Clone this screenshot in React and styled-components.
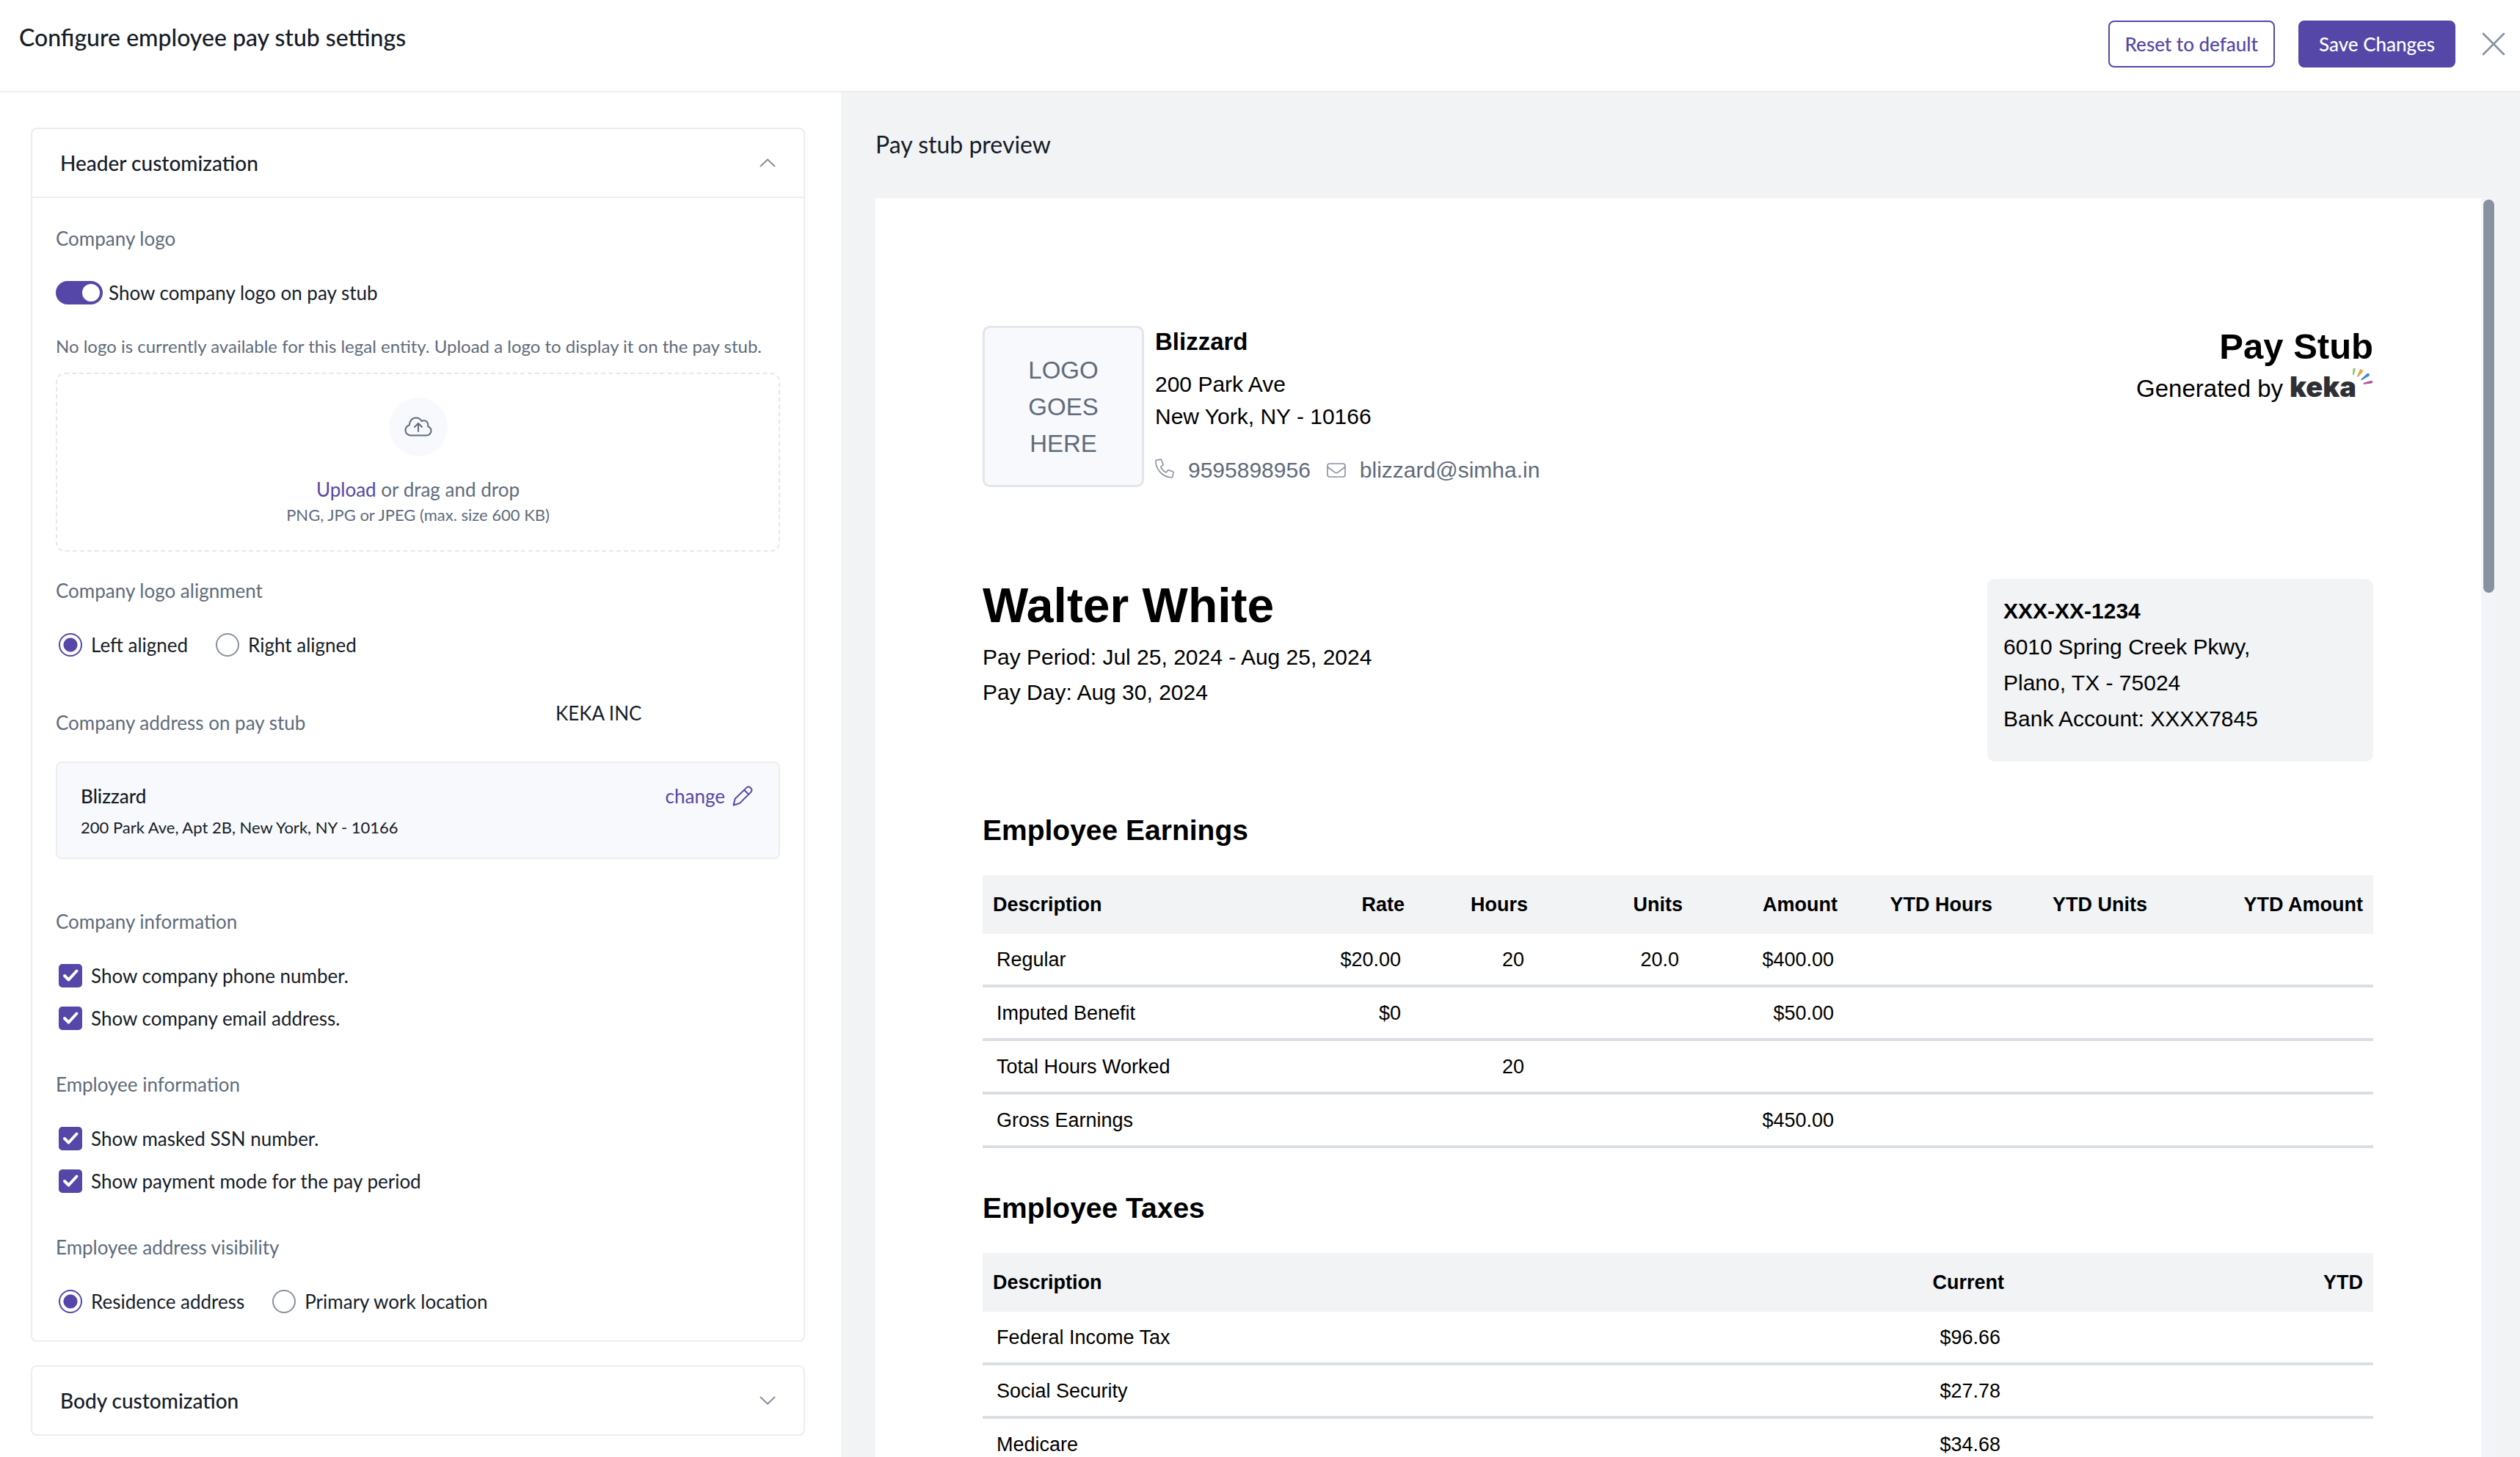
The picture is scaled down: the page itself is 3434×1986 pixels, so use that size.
import React, { useState } from "react";
import styled, { createGlobalStyle } from "styled-components";

const GlobalStyle = createGlobalStyle`
  * {
    box-sizing: border-box;
  }
  body {
    margin: 0;
    background: #fff;
    color: #161c28;
    font-family: Lato, "Open Sans", sans-serif;
    font-size: 26px;
    line-height: 32px;
  }
  h1, h2, h3, p, fieldset, legend {
    margin: 0;
    padding: 0;
    border: 0;
    font-weight: 400;
  }
  button, input {
    font: inherit;
    margin: 0;
  }
`;

const Page = styled.div`
  display: flex;
  flex-direction: column;
  height: 100vh;
  overflow: hidden;
`;

const TopBar = styled.header`
  flex: none;
  display: flex;
  align-items: flex-start;
  justify-content: space-between;
  padding: 28px 20px 32px 26px;
  border-bottom: 2px solid #ebedee;
`;

const Title = styled.h1`
  font-size: 32px;
  line-height: 46px;
  font-weight: 500;
`;

const Actions = styled.div`
  display: flex;
  align-items: center;
`;

const Button = styled.button`
  min-width: 214px;
  height: 64px;
  margin-right: ${(props) => (props.$primary ? "36px" : "32px")};
  padding: 0 21px;
  border: 2px solid #5547a8;
  border-radius: 8px;
  background: ${(props) => (props.$primary ? "#5547a8" : "#fff")};
  color: ${(props) => (props.$primary ? "#fff" : "#5547a8")};
  font-weight: 500;
`;

const PlainButton = styled.button`
  display: flex;
  align-items: center;
  padding: 0;
  border: 0;
  background: none;
  color: #87919f;
`;

const Main = styled.main`
  flex: 1;
  min-height: 0;
  display: grid;
  grid-template-columns: 1146fr 2288fr;
`;

const Settings = styled.section`
  display: flex;
  flex-direction: column;
  gap: 32px;
  padding: 48px 49px 0 42px;
`;

const Card = styled.div`
  border: 2px solid #ebedee;
  border-radius: 8px;
`;

const CardToggle = styled.button`
  display: flex;
  align-items: center;
  justify-content: space-between;
  width: 100%;
  height: ${(props) => (props.$open ? "94px" : "92px")};
  padding: 0 38px;
  border: 0;
  border-bottom: ${(props) => (props.$open ? "2px solid #ebedee" : "0")};
  background: none;
  color: inherit;
  font-size: 28px;
  font-weight: 500;
`;

const CardBody = styled.div`
  padding: 39px 32px 37px;
`;

const Group = styled.fieldset`
  min-width: 0;
  margin-bottom: ${(props) => props.$space || "58px"};

  &:last-child {
    margin-bottom: 0;
  }
`;

const Label = styled.legend`
  display: block;
  margin-bottom: 42px;
  color: #5f6b7b;
`;

const Options = styled.div`
  display: flex;
  flex-direction: ${(props) => (props.$row ? "row" : "column")};
  gap: ${(props) => (props.$row ? "38px" : "26px")};
  padding-left: 4px;
`;

const Option = styled.label`
  display: flex;
  align-items: center;
  gap: 12px;
`;

const Radio = styled.input.attrs({ type: "radio" })`
  appearance: none;
  width: 32px;
  height: 32px;
  border: 2px solid #87919f;
  border-radius: 50%;
  background: #fff;

  &:checked {
    border-color: #5547a8;
    background: radial-gradient(circle, #5547a8 9px, #fff 10px);
  }
`;

const TickBox = styled.span`
  display: grid;
  width: 32px;
  height: 32px;

  > * {
    grid-area: 1 / 1;
  }
  svg {
    pointer-events: none;
    z-index: 1;
  }
`;

const Checkbox = styled.input.attrs({ type: "checkbox" })`
  appearance: none;
  width: 32px;
  height: 32px;
  border: 2px solid #87919f;
  border-radius: 5px;

  &:checked {
    border-color: #5547a8;
    background: #5547a8;
  }
`;

const SwitchLabel = styled.label`
  display: flex;
  align-items: center;
  gap: 8px;
`;

const Switch = styled.input.attrs({ type: "checkbox", role: "switch" })`
  appearance: none;
  display: flex;
  width: 64px;
  height: 32px;
  padding: 4px;
  border-radius: 16px;
  background: #b4bbc5;

  &::before {
    content: "";
    width: 24px;
    height: 24px;
    border-radius: 50%;
    background: #fff;
  }
  &:checked {
    justify-content: flex-end;
    background: #5547a8;
  }
`;

const Note = styled.p`
  margin: 41px 0 20px;
  color: #5f6b7b;
  font-size: 24px;
`;

const DropZone = styled.div`
  display: flex;
  flex-direction: column;
  align-items: center;
  padding: 32px 0 34px;
  border: 2px dashed #e6e8ea;
  border-radius: 12px;
  color: #5f6b7b;
`;

const CloudBadge = styled.div`
  display: flex;
  align-items: center;
  justify-content: center;
  width: 80px;
  height: 80px;
  margin-bottom: 29px;
  border-radius: 50%;
  background: #f8f9fc;
`;

const Link = styled.a`
  display: ${(props) => (props.$icon ? "flex" : "inline")};
  align-items: center;
  gap: 10px;
  color: #5547a8;
  text-decoration: none;
`;

const Hint = styled.p`
  margin-top: 5px;
  font-size: 22px;
  line-height: 28px;
`;

const AddressHeading = styled.div`
  display: flex;
  height: 45px;
  margin-bottom: 37px;
`;

const AddressLabel = styled.h3`
  align-self: flex-end;
  width: 69%;
  color: #5f6b7b;
  font-size: 26px;
`;

const AddressCard = styled.div`
  margin-bottom: 69px;
  padding: 29px 35px 27px 32px;
  border: 2px solid #ebedee;
  border-radius: 8px;
  background: #f8f9fc;
`;

const AddressTop = styled.div`
  display: flex;
  justify-content: space-between;
  font-weight: 500;

  a {
    font-weight: 400;
  }
`;

const AddressText = styled.p`
  margin-top: 13px;
  font-size: 22px;
  line-height: 28px;
`;

const Preview = styled.section`
  display: flex;
  flex-direction: column;
  min-height: 0;
  padding: 48px 32px 0 47px;
  background: #f1f3f5;
`;

const PreviewTitle = styled.h2`
  margin-bottom: 50px;
  font-size: 32px;
  line-height: 46px;
`;

const Viewport = styled.div`
  flex: 1;
  display: flex;
  min-height: 0;
  overflow: hidden;
`;

const Track = styled.div`
  flex: 0 0 21px;
  padding: 1px 2px;
  background: #f3f4f9;
`;

const Thumb = styled.div`
  height: 31.4%;
  border: 1px solid #fff;
  border-radius: 9px;
  background: #87919f;
`;

const Paper = styled.article`
  flex: 1;
  padding: 174px 147px 0 146px;
  background: #fff;
  color: #000;
  font-family: "Liberation Sans", Arial, sans-serif;
  font-size: 30px;
`;

const StubHeader = styled.div`
  display: flex;
  justify-content: space-between;
  height: 220px;
  margin-bottom: 125px;
`;

const Company = styled.div`
  display: flex;
  gap: 15px;
`;

const LogoBox = styled.div`
  display: flex;
  align-items: center;
  justify-content: center;
  width: 220px;
  padding: 2px 50px 0;
  border: 3px solid #e2e5e9;
  border-radius: 10px;
  background: #f8f9fc;
  color: #5f6b7b;
  font-size: 33px;
  line-height: 50px;
  text-align: center;
`;

const CompanyName = styled.h3`
  margin-bottom: 14px;
  font-size: 33px;
  line-height: 44px;
  font-weight: 700;
`;

const Line = styled.p`
  line-height: ${(props) => props.$height || "44px"};
  font-weight: ${(props) => (props.$bold ? 700 : 400)};
`;

const Contact = styled.div`
  display: flex;
  align-items: center;
  margin-top: 29px;
  line-height: 44px;
  color: #5f6b7b;

  svg {
    flex: none;
    color: #87919f;
    margin-right: 19px;
  }
  span {
    margin-right: 22px;
  }
`;

const Brand = styled.div`
  text-align: right;
`;

const StubTitle = styled.h2`
  margin-bottom: 8px;
  font-size: 49px;
  line-height: 56px;
  font-weight: 700;
`;

const Generated = styled.div`
  display: flex;
  justify-content: flex-end;
  font-size: 33px;
  line-height: 44px;
`;

const KekaLogo = styled.span`
  display: flex;
  align-items: flex-start;
  margin-left: 9px;
  color: #2f3036;
  font-family: Inter, sans-serif;
  font-size: 38px;
  line-height: 38px;
  font-weight: 900;

  svg {
    margin: -7px 0 0 -6px;
  }
`;

const Identity = styled.div`
  display: flex;
  align-items: flex-start;
  justify-content: space-between;
`;

const PersonName = styled.h2`
  margin-bottom: 11px;
  font-size: 66px;
  line-height: 72px;
  font-weight: 700;
`;

const BankBox = styled.div`
  flex: 0 0 526px;
  padding: 19px 22px 34px;
  border-radius: 10px;
  background: #f1f3f5;
`;

const SectionTitle = styled.h3`
  margin: ${(props) => (props.$first ? "70px" : "58px")} 0 37px;
  font-size: 39px;
  line-height: 48px;
  font-weight: 700;
`;

const Table = styled.table`
  width: 100%;
  table-layout: fixed;
  border-collapse: separate;
  border-spacing: 0;
  font-size: 27px;
  line-height: 32px;

  th,
  td {
    text-align: right;
  }
  th:first-child,
  td:first-child {
    text-align: left;
  }
  th {
    height: 80px;
    padding: 0 14px;
    background: #f1f3f5;
    font-weight: 700;
  }
  td {
    height: 73px;
    padding: 0 19px;
    border-bottom: 4px solid #dadfe6;
  }
`;

const earnings = {
  widths: [421, 168, 168, 211, 211, 211, 211, 294],
  columns: ["Description", "Rate", "Hours", "Units", "Amount", "YTD Hours", "YTD Units", "YTD Amount"],
  rows: [
    ["Regular", "$20.00", "20", "20.0", "$400.00", "", "", ""],
    ["Imputed Benefit", "$0", "", "", "$50.00", "", "", ""],
    ["Total Hours Worked", "", "20", "", "", "", "", ""],
    ["Gross Earnings", "", "", "", "$450.00", "", "", ""],
  ],
};

const taxes = {
  widths: [917, 489, 489],
  columns: ["Description", "Current", "YTD"],
  rows: [
    ["Federal Income Tax", "$96.66", ""],
    ["Social Security", "$27.78", ""],
    ["Medicare", "$34.68", ""],
  ],
};

const StubTable = ({ data }) => (
  <Table>
    <colgroup>
      {data.widths.map((width, i) => (
        <col key={i} width={width} />
      ))}
    </colgroup>
    <thead>
      <tr>
        {data.columns.map((name) => (
          <th key={name} scope="col">{name}</th>
        ))}
      </tr>
    </thead>
    <tbody>
      {data.rows.map((row) => (
        <tr key={row[0]}>
          {row.map((cell, i) => (
            <td key={i}>{cell}</td>
          ))}
        </tr>
      ))}
    </tbody>
  </Table>
);

const Chevron = ({ up }) => (
  <svg width="22" height="12" viewBox="0 0 22 12" fill="none" stroke="#87919f" strokeWidth="2" strokeLinecap="round">
    <path d={up ? "M1.5 10.5 11 1.5l9.5 9" : "M1.5 1.5 11 10.5l9.5-9"} />
  </svg>
);

const CloseIcon = () => (
  <svg width="32" height="32" viewBox="0 0 32 32" stroke="currentColor" strokeWidth="2.6" strokeLinecap="round">
    <path d="M2 2l28 28M30 2 2 30" />
  </svg>
);

const CloudIcon = () => (
  <svg width="38" height="28" viewBox="0 0 38 28" fill="none" stroke="#5f6b7b" strokeWidth="2" strokeLinecap="round" strokeLinejoin="round">
    <path d="M9 25.5C4.600 25.500 1.500 22.600 1.500 18.600c0-3.400 2-6 5.300-7.100C7 5.500 10.800 1.500 15.900 1.500c3.500 0 6.200 1.700 7.800 4.600 1-.6 2-.8 3.100-.8 3.300 0 5.600 2.500 5.500 6-.1.700-.1 1.300-.2 1.900 2.600 1.200 4.400 3.200 4.400 5.700 0 3.900-2.900 6.600-6.700 6.600z" />
    <path d="M19 20V9.500M14 14l5-5 5 5" />
  </svg>
);

const PencilIcon = () => (
  <svg width="28" height="28" viewBox="0 0 28 28" fill="none" stroke="currentColor" strokeWidth="2" strokeLinecap="round" strokeLinejoin="round">
    <path d="M1.500 26.500l2.200-8.700L19.300 2.600a3.600 3.600 0 0 1 5.200 0l.9.900a3.600 3.600 0 0 1 0 5.100L10 23.900z" />
    <path d="M16.200 5.800l6 6" />
  </svg>
);

const PhoneIcon = () => (
  <svg width="26" height="32" viewBox="0 0 26 32" fill="none" stroke="currentColor" strokeWidth="1.600" strokeLinejoin="round">
    <path d="M1.200 2.500 7 1.100c.7-.2 1.300.2 1.500.8l2.400 5.700c.2.500.1 1.100-.4 1.500l-2.800 2.200c1.600 3.500 4 6 7.500 7.600l2.200-2.800c.4-.5 1-.6 1.500-.4l5.300 2.200c.6.3.9.900.8 1.500l-1.300 5.400c-.1.600-.6 1-1.300 1C11.200 25.700.9 15.400.9 3.600c0-.5 0-.9.300-1.100z" />
  </svg>
);

const MailIcon = () => (
  <svg width="26" height="20" viewBox="0 0 26 20" fill="none" stroke="currentColor" strokeWidth="1.600" strokeLinejoin="round">
    <rect x="1" y="1" width="24" height="18" rx="3" />
    <path d="M1 5.500 10.500 12.700c1.600 1.200 3.400 1.200 5 0L25 5.500" />
  </svg>
);

const Rays = () => (
  <svg width="29" height="24" viewBox="0 0 29 24" strokeLinejoin="round" strokeWidth="2">
    <path d="M1.900 9.200 2.400 2l1.500.2z" fill="#93c572" stroke="#93c572" />
    <path d="M8 11.800 11.800 3.300l2 .9-.2 1.300z" fill="#e8a33d" stroke="#e8a33d" />
    <path d="M13.400 16.200 21.200 9l1.700.2-.3 1.500z" fill="#4189c0" stroke="#4189c0" />
    <path d="M16.400 21.800 25.600 18.900l1.800.4-1 1.200z" fill="#a9559b" stroke="#a9559b" />
  </svg>
);

const CheckOption = ({ children }) => (
  <Option>
    <TickBox>
      <Checkbox defaultChecked />
      <svg viewBox="0 0 32 32" fill="none" stroke="#fff" strokeWidth="4" strokeLinecap="round" strokeLinejoin="round">
        <path d="M8 16l5.500 5.500L24.500 9.500" />
      </svg>
    </TickBox>
    {children}
  </Option>
);

const RadioOptions = ({ name, options }) => (
  <Options $row>
    {options.map((text, i) => (
      <Option key={text}>
        <Radio name={name} defaultChecked={i === 0} />
        {text}
      </Option>
    ))}
  </Options>
);

const HeaderSettings = () => (
  <CardBody>
    <Group $space="37px">
      <Label>Company logo</Label>
      <SwitchLabel>
        <Switch defaultChecked />
        Show company logo on pay stub
      </SwitchLabel>
      <Note>
        No logo is currently available for this legal entity. Upload a logo to display it on the pay stub.
      </Note>
      <DropZone>
        <CloudBadge>
          <CloudIcon />
        </CloudBadge>
        <p>
          <Link href="#upload">Upload</Link> or drag and drop
        </p>
        <Hint>PNG, JPG or JPEG (max. size 600 KB)</Hint>
      </DropZone>
    </Group>
    <Group $space="61px">
      <Label>Company logo alignment</Label>
      <RadioOptions name="alignment" options={["Left aligned", "Right aligned"]} />
    </Group>
    <AddressHeading>
      <AddressLabel>Company address on pay stub</AddressLabel>
      <span>KEKA INC</span>
    </AddressHeading>
    <AddressCard>
      <AddressTop>
        Blizzard
        <Link href="#change" $icon>
          change <PencilIcon />
        </Link>
      </AddressTop>
      <AddressText>200 Park Ave, Apt 2B, New York, NY - 10166</AddressText>
    </AddressCard>
    <Group>
      <Label>Company information</Label>
      <Options>
        <CheckOption>Show company phone number.</CheckOption>
        <CheckOption>Show company email address.</CheckOption>
      </Options>
    </Group>
    <Group>
      <Label>Employee information</Label>
      <Options>
        <CheckOption>Show masked SSN number.</CheckOption>
        <CheckOption>Show payment mode for the pay period</CheckOption>
      </Options>
    </Group>
    <Group>
      <Label>Employee address visibility</Label>
      <RadioOptions name="address" options={["Residence address", "Primary work location"]} />
    </Group>
  </CardBody>
);

const PayStub = () => (
  <Paper>
    <StubHeader>
      <Company>
        <LogoBox>LOGO GOES HERE</LogoBox>
        <div>
          <CompanyName>Blizzard</CompanyName>
          <Line>200 Park Ave</Line>
          <Line>New York, NY - 10166</Line>
          <Contact>
            <PhoneIcon />
            <span>9595898956</span>
            <MailIcon />
            <span>blizzard@simha.in</span>
          </Contact>
        </div>
      </Company>
      <Brand>
        <StubTitle>Pay Stub</StubTitle>
        <Generated>
          Generated by
          <KekaLogo>
            keka
            <Rays />
          </KekaLogo>
        </Generated>
      </Brand>
    </StubHeader>
    <Identity>
      <div>
        <PersonName>Walter White</PersonName>
        <Line $height="48px">Pay Period: Jul 25, 2024 - Aug 25, 2024</Line>
        <Line $height="48px">Pay Day: Aug 30, 2024</Line>
      </div>
      <BankBox>
        <Line $height="49px" $bold>XXX-XX-1234</Line>
        <Line $height="49px">6010 Spring Creek Pkwy,</Line>
        <Line $height="49px">Plano, TX - 75024</Line>
        <Line $height="49px">Bank Account: XXXX7845</Line>
      </BankBox>
    </Identity>
    <SectionTitle $first>Employee Earnings</SectionTitle>
    <StubTable data={earnings} />
    <SectionTitle>Employee Taxes</SectionTitle>
    <StubTable data={taxes} />
  </Paper>
);

const App = () => {
  const [open, setOpen] = useState(true);

  return (
    <Page>
      <GlobalStyle />
      <TopBar>
        <Title>Configure employee pay stub settings</Title>
        <Actions>
          <Button type="button">Reset to default</Button>
          <Button type="button" $primary>Save Changes</Button>
          <PlainButton type="button" aria-label="Close">
            <CloseIcon />
          </PlainButton>
        </Actions>
      </TopBar>
      <Main>
        <Settings>
          <Card>
            <CardToggle type="button" $open={open} aria-expanded={open} onClick={() => setOpen(!open)}>
              Header customization
              <Chevron up={open} />
            </CardToggle>
            {open && <HeaderSettings />}
          </Card>
          <Card>
            <CardToggle type="button" aria-expanded="false">
              Body customization
              <Chevron />
            </CardToggle>
          </Card>
        </Settings>
        <Preview>
          <PreviewTitle>Pay stub preview</PreviewTitle>
          <Viewport>
            <PayStub />
            <Track>
              <Thumb />
            </Track>
          </Viewport>
        </Preview>
      </Main>
    </Page>
  );
};

export default App;
